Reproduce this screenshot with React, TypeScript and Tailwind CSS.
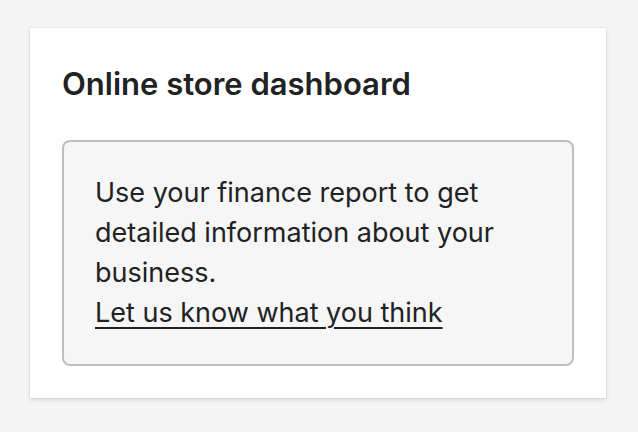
export default function App() {
  return (
    <div className="min-h-screen bg-[#f4f4f4] pt-[28px] px-[30px] font-['Inter',sans-serif] text-[#202223]">
      <div className="w-[576px] bg-white p-[32px] shadow-[0_0_0_1px_rgba(63,63,68,0.05),0_2px_4px_rgba(63,63,68,0.15)]">
        <h2 className="text-[31px] leading-[48px] font-semibold">Online store dashboard</h2>
        <div className="mt-[32px] rounded-[8px] border-2 border-[#babfc3] bg-[#f6f6f7] p-[31px] text-[27px] leading-[40px]">
          <p>Use your finance report to get detailed information about your business.</p>
          <a href="#" className="underline underline-offset-[5px] decoration-[2px]">
            Let us know what you think
          </a>
        </div>
      </div>
    </div>
  );
}
